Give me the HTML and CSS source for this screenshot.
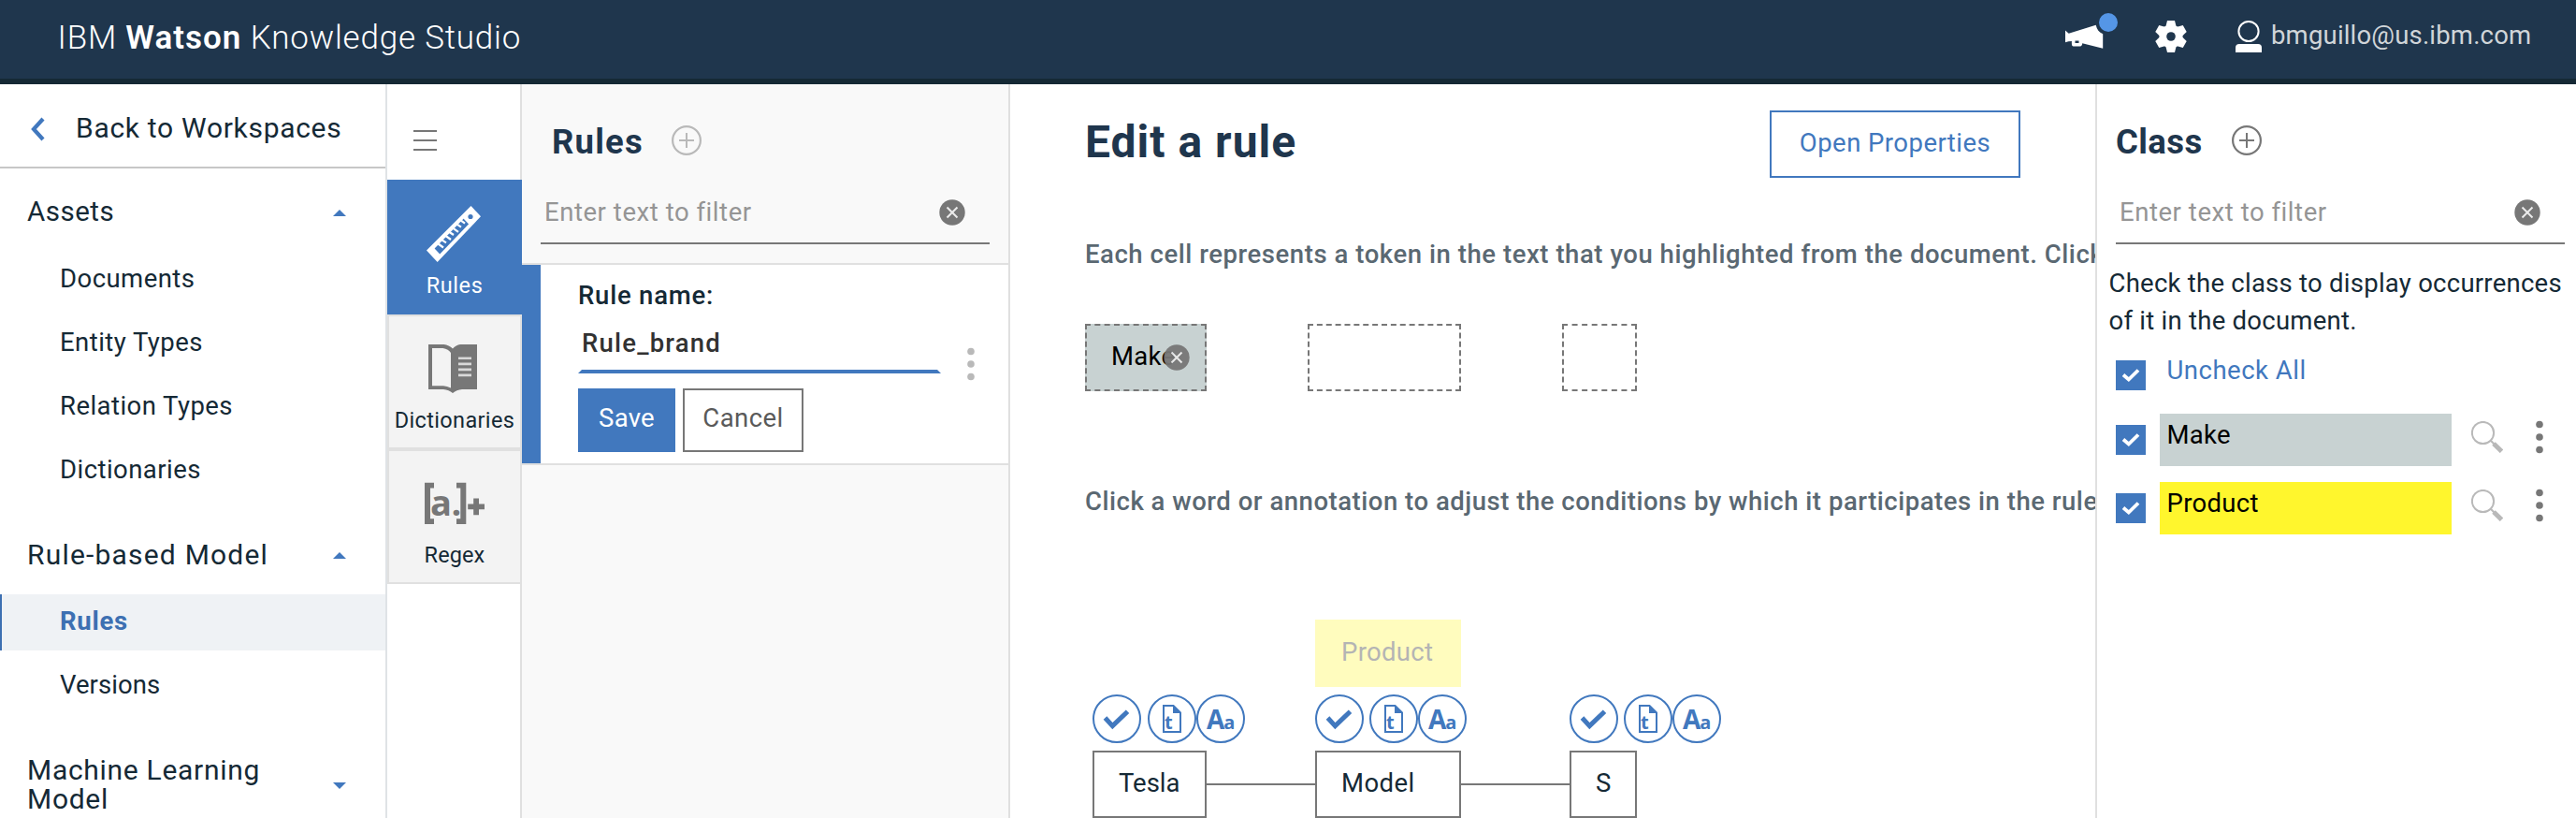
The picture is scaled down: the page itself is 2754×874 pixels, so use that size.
FILE: index.html
```html
<!DOCTYPE html>
<html lang="en">
<head>
<meta charset="utf-8">
<title>IBM Watson Knowledge Studio</title>
<link rel="stylesheet" href="styles.css">
</head>
<body>
<svg class="defs" aria-hidden="true">
  <symbol id="clear" viewBox="0 0 28 28">
    <circle cx="14" cy="14" r="13.7" fill="#777"/>
    <path d="M8.5 8.5 19.5 19.5M19.5 8.5 8.5 19.5" stroke="#fff" stroke-opacity=".85" stroke-width="2"/>
  </symbol>
  <symbol id="plus" viewBox="0 0 32 32">
    <circle cx="16" cy="16" r="14.9" fill="none" stroke="currentColor" stroke-width="2.2"/>
    <path d="M16 8v16M8 16h16" stroke="currentColor" stroke-width="2"/>
  </symbol>
  <symbol id="kebab" viewBox="0 0 8 36">
    <g fill="currentColor"><circle cx="4" cy="4.5" r="3.8"/><circle cx="4" cy="18" r="3.8"/><circle cx="4" cy="31.5" r="3.8"/></g>
  </symbol>
  <symbol id="search" viewBox="0 0 34 34">
    <g fill="none" stroke="#b9b9b9"><circle cx="12.5" cy="12.5" r="11.6" stroke-width="2"/><path d="M20.8 20.8l4 4" stroke-width="2"/><path d="M24 24l8.5 8.3" stroke-width="5"/></g>
  </symbol>
  <symbol id="tick" viewBox="0 0 32 32">
    <path d="M8 15.5 13.8 20.5 24 10.5" fill="none" stroke="#fff" stroke-width="3.8"/>
  </symbol>
  <symbol id="b-check" viewBox="0 0 52 52">
    <circle cx="26" cy="26" r="25" fill="#fff" stroke="#4178be" stroke-width="2"/>
    <path d="M13.5 25 21.4 33.6 37.5 18.2" fill="none" stroke="#4178be" stroke-width="5"/>
  </symbol>
  <symbol id="b-doc" viewBox="0 0 52 52">
    <circle cx="26" cy="26" r="25" fill="#fff" stroke="#4178be" stroke-width="2"/>
    <path d="M17 12h10.5l7.5 7.5V40H17z" fill="none" stroke="#4178be" stroke-width="2"/>
    <path d="M27 11v9h9z" fill="#4178be"/>
  </symbol>
  <symbol id="b-ring" viewBox="0 0 52 52">
    <circle cx="26" cy="26" r="25" fill="#fff" stroke="#4178be" stroke-width="2"/>
  </symbol>
</svg>

<header class="topbar">
  <h1 class="brand">IBM <b>Watson</b> Knowledge Studio</h1>
  <div class="tools">
    <svg class="i-news" viewBox="2204 0 64 84">
      <path d="M2208 32.5l3.7 3.2 29-9c1 4.500 3.500 8 7.500 9.500v15.600l-22-5.600c0 2.500-1 3.300-3.500 3.300h-5.500c-2 0-2.500-1-2.300-5.500l-3.500.2-3.400 1z" fill="#fff"/>
      <rect x="2218.500" y="43.500" width="4" height="2.500" fill="#1f364d"/>
      <circle cx="2254" cy="24" r="10" fill="#5596e6"/>
    </svg>
    <svg class="i-gear" viewBox="-18 -39 36 84">
      <g fill="#fff">
        <circle r="12.5"/>
        <path id="tooth" d="M-4-17H4L6-9H-6z"/>
        <use href="#tooth" transform="rotate(60)"/><use href="#tooth" transform="rotate(120)"/><use href="#tooth" transform="rotate(180)"/><use href="#tooth" transform="rotate(240)"/><use href="#tooth" transform="rotate(300)"/>
      </g>
      <circle r="4.800" fill="#1f364d"/>
    </svg>
    <svg class="i-user" viewBox="2390 0 28 84">
      <circle cx="2404" cy="33.500" r="10.600" fill="none" stroke="#fff" stroke-width="2"/>
      <path d="M2390 56v-5q0-4 4-4h20q4 0 4 4v5z" fill="#fff"/>
    </svg>
    <span class="email">bmguillo@us.ibm.com</span>
  </div>
</header>

<div class="app">
  <nav class="sidebar">
    <a class="back"><svg viewBox="0 0 16 26"><path d="M13 2 3 13 13 24" fill="none" stroke="#4178be" stroke-width="4.200"/></svg><span>Back to Workspaces</span></a>
    <div class="groups">
      <section>
        <h2 class="group assets"><span>Assets</span><i class="up"></i></h2>
        <ul>
          <li>Documents</li>
          <li>Entity Types</li>
          <li>Relation Types</li>
          <li>Dictionaries</li>
        </ul>
      </section>
      <section>
        <h2 class="group model"><span>Rule-based Model</span><i class="up"></i></h2>
        <ul>
          <li class="current">Rules</li>
          <li class="versions">Versions</li>
        </ul>
      </section>
      <section>
        <h2 class="group ml"><span>Machine Learning<br>Model</span><i class="down"></i></h2>
      </section>
    </div>
  </nav>

  <div class="rail">
    <div class="menu"><span></span><span></span><span></span></div>
    <div class="tile active">
      <svg viewBox="0 0 60 60" width="60" height="60">
        <path d="M47.500 0 58 11.300 11.600 60 0 47.500z" fill="#fff"/>
        <path d="M46.800 6.200 52.400 11.700 14.200 51.600 8.600 45.600z" fill="#4178be"/>
        <path d="M12.500 40.500l5.500 4M16.500 36.300l4.500 3M20.500 32l5.500 4M24.500 28l4.500 3M28.500 23.800l5.500 4M32.500 19.600l4.500 3M36.500 15.400l4.500 3.300" stroke="#fff" stroke-width="2.200"/>
        <path d="M38.500 12.500 48 3.500l7 7.500-9 9.500z" fill="#fff"/>
        <circle cx="47" cy="11.500" r="2.600" fill="#4178be"/>
      </svg>
      <span class="t-rules">Rules</span>
    </div>
    <div class="tile">
      <svg viewBox="0 0 60 60" width="60" height="60">
        <path d="M2 4H18.500Q24 4.500 28 8.500 31.500 4.500 36 4H54V52H38Q32 52.500 28 56 24 52.500 18 52H2z" fill="#777"/>
        <path d="M6 8H17.500Q23.500 9 26 13V50.500Q22 48.500 18 48.300H6z" fill="#f3f3f3"/>
        <path d="M34 18.700h14M34 24.900h14M34 30.900h14M34 36.900h14" stroke="#d8d8d8" stroke-width="2.600"/>
      </svg>
      <span class="t-dict">Dictionaries</span>
    </div>
    <div class="tile">
      <svg viewBox="0 0 66 60" width="66" height="60">
        <path d="M1 7.700H11V13.500H7V46.200H11V52H1zM35 7.700H45.300V52H35V46.200H39.300V13.500H35zM53.200 24.500h5.800v6h6v5.800h-6v6h-5.800v-6h-6v-5.800h6z" fill="#777"/>
        <text x="7" y="42.500" class="regex-a" font-size="38">a.</text>
      </svg>
      <span class="t-regex">Regex</span>
    </div>
  </div>

  <section class="rules">
    <div class="panel-head">
      <div class="panel-title"><h2 class="h-rules">Rules</h2><svg class="plus muted"><use href="#plus"/></svg></div>
      <div class="filter"><span>Enter text to filter</span><svg class="clear"><use href="#clear"/></svg></div>
    </div>
    <div class="card">
      <div class="card-body">
        <div class="form">
          <label>Rule name:</label>
          <div class="field">Rule_brand</div>
          <div class="actions"><button class="save">Save</button><button class="cancel">Cancel</button></div>
        </div>
        <svg class="kebab muted"><use href="#kebab"/></svg>
      </div>
    </div>
  </section>

  <main class="editor">
    <div class="editor-head"><h2>Edit a rule</h2><button class="props">Open Properties</button></div>
    <p class="hint first">Each cell represents a token in the text that you highlighted from the document. Click</p>
    <div class="cells">
      <div class="cell c1">Make<svg class="clear remove"><use href="#clear"/></svg></div>
      <div class="cell c2"></div>
      <div class="cell c3"></div>
    </div>
    <p class="hint second">Click a word or annotation to adjust the conditions by which it participates in the rule</p>
    <div class="graph">
      <div class="node n1">
        <div class="badges"><svg><use href="#b-check"/></svg><svg><use href="#b-doc"/><text x="18" y="37" class="glyph t">t</text></svg><svg><use href="#b-ring"/><text x="11" y="37" class="glyph">A<tspan class="low" dx="-1">a</tspan></text></svg></div>
        <div class="word tesla">Tesla</div>
      </div>
      <div class="link"></div>
      <div class="node n2">
        <div class="annotation">Product</div>
        <div class="badges"><svg><use href="#b-check"/></svg><svg><use href="#b-doc"/><text x="18" y="37" class="glyph t">t</text></svg><svg><use href="#b-ring"/><text x="11" y="37" class="glyph">A<tspan class="low" dx="-1">a</tspan></text></svg></div>
        <div class="word mdl">Model</div>
      </div>
      <div class="link"></div>
      <div class="node n3">
        <div class="badges"><svg><use href="#b-check"/></svg><svg><use href="#b-doc"/><text x="18" y="37" class="glyph t">t</text></svg><svg><use href="#b-ring"/><text x="11" y="37" class="glyph">A<tspan class="low" dx="-1">a</tspan></text></svg></div>
        <div class="word">S</div>
      </div>
    </div>
  </main>

  <aside class="classes">
    <div class="panel-title"><h2 class="h-class">Class</h2><svg class="plus"><use href="#plus"/></svg></div>
    <div class="filter"><span>Enter text to filter</span><svg class="clear"><use href="#clear"/></svg></div>
    <p class="note">Check the class to display occurrences<br>of it in the document.</p>
    <div class="row all"><svg class="box"><use href="#tick"/></svg><a>Uncheck All</a></div>
    <div class="row"><svg class="box"><use href="#tick"/></svg><div class="label make">Make</div><svg class="search"><use href="#search"/></svg><svg class="kebab"><use href="#kebab"/></svg></div>
    <div class="row"><svg class="box"><use href="#tick"/></svg><div class="label product">Product</div><svg class="search"><use href="#search"/></svg><svg class="kebab"><use href="#kebab"/></svg></div>
  </aside>
</div>
</body>
</html>
```
FILE: styles.css
```css
* { box-sizing: border-box; }
body {
  margin: 0;
  height: 874px;
  overflow: hidden;
  background: #fff;
  color: #152935;
  font: 27.5px/32px Roboto, "Noto Sans", sans-serif;
  letter-spacing: .45px;
}
h1, h2, p, ul { margin: 0; padding: 0; font-weight: 400; }
ul { list-style: none; }
button { font: inherit; letter-spacing: inherit; border-radius: 0; padding: 0; background: #fff; }
svg { display: block; flex: none; }
.defs { position: absolute; width: 0; height: 0; }
.glyph, .regex-a { font-family: "Open Sans", "Noto Sans", sans-serif; font-weight: 700; letter-spacing: 0; fill: #4178be; }
.glyph { font-size: 28px; }
.glyph.t { font-size: 20px; }
.low { font-size: 20px; }
.regex-a { fill: #777; letter-spacing: -.5px; }

/* top bar */
.topbar {
  display: flex;
  justify-content: space-between;
  height: 90px;
  background: #1f364d;
  border-bottom: 6px solid #152935;
  color: #fff;
}
.brand { padding-left: 61.500px; font-size: 35px; line-height: 82px; font-weight: 300; letter-spacing: .8px; white-space: nowrap; }
.brand b { font-weight: 600; letter-spacing: 1px; }
.tools { display: flex; width: 550px; }
.i-news { width: 64px; height: 84px; }
.i-gear { width: 36px; height: 84px; margin-left: 35px; }
.i-user { width: 28px; height: 84px; margin-left: 51px; }
.email { margin-left: 10px; line-height: 75px; letter-spacing: .18px; color: #d0d5d9; }

.app { display: flex; height: 784px; }

/* sidebar */
.sidebar { width: 414px; flex: none; border-right: 2px solid #dfe3e6; }
.back {
  display: flex;
  height: 90px;
  padding: 5px 0 0 33px;
  border-bottom: 2px solid #c7c7c7;
  font-size: 30px;
  line-height: 83px;
  letter-spacing: .7px;
}
.back svg { width: 16px; height: 26px; margin: 30px 32px 0 0; }
.groups { display: flex; flex-direction: column; gap: 28px; }
.group {
  display: flex;
  justify-content: space-between;
  align-items: center;
  padding: 15.500px 42px 15.500px 29px;
  margin-bottom: 12px;
  font-size: 29.500px;
  line-height: 31px;
}
.groups section:first-child { padding-top: 15px; }
.assets { letter-spacing: .5px; }
.model { font-size: 30px; letter-spacing: 1.200px; }
.ml { font-size: 30px; letter-spacing: .700px; }
.up, .down { border: 7px solid transparent; border-top: 0; border-bottom: 7px solid #4178be; margin-top: 3px; }
.down { border-bottom: 0; border-top: 7px solid #4178be; }
.sidebar ul { display: flex; flex-direction: column; gap: 8px; }
.sidebar li { height: 60px; padding-left: 62px; border-left: 2px solid transparent; line-height: 57.500px; }
.sidebar .current { background: #eff2f5; border-left-color: #3d70b2; color: #3d70b2; font-weight: 700; letter-spacing: .7px; }
.sidebar .versions { letter-spacing: .06px; }

/* tool rail */
.rail { width: 144px; flex: none; border-right: 2px solid #e0e0e0; }
.menu { display: flex; flex-direction: column; gap: 8px; height: 102px; padding: 49px 0 0 27.500px; }
.menu span { width: 25px; height: 2px; background: #777; }
.tile {
  display: flex;
  flex-direction: column;
  align-items: center;
  gap: 10px;
  height: 144px;
  margin-right: -2px;
  padding-top: 26px;
  border: 2px solid #e0e0e0;
  background: #f3f3f3;
  font-size: 23.500px;
  line-height: 30px;
}
.tile.active { background: #4178be; border-color: #4178be; color: #fff; }
.t-rules { letter-spacing: .6px; }
.t-dict { letter-spacing: .35px; }
.t-regex { letter-spacing: .1px; }

/* shared panel parts */
.panel-title { display: flex; padding: 30px 0 0 32px; height: 94px; }
.panel-title h2 { font-size: 36.500px; line-height: 63px; font-weight: 700; color: #1f364d; }
.h-rules { width: 128px; letter-spacing: 1.200px; }
.h-class { width: 124px; letter-spacing: .400px; }
.plus { width: 32px; height: 32px; margin-top: 14px; color: #777; }
.plus.muted, .kebab.muted { color: #b9b9b9; }
.filter {
  display: flex;
  justify-content: space-between;
  align-items: center;
  width: 480px;
  height: 68px;
  margin: 9px 0 0 20px;
  padding: 1px 26px 0 4px;
  border-bottom: 2px solid #777;
  color: #959595;
  letter-spacing: .55px;
}
.clear { width: 28px; height: 28px; }
.kebab { width: 8px; height: 36px; color: #777; }

/* rules panel */
.rules { width: 522px; flex: none; background: #f9f9f9; border-right: 2px solid #e0e0e0; }
.panel-head { height: 193px; border-bottom: 2px solid #e0e0e0; }
.card { background: #fff; border-bottom: 2px solid #e0e0e0; }
.card-body { display: flex; height: 212px; padding: 16px 0 0 40px; border-left: 20px solid #4178be; }
.form { width: 388px; }
.form label { display: block; line-height: 33px; font-weight: 500; letter-spacing: .78px; }
.field {
  height: 67px;
  padding-top: 6px;
  border: 4px solid transparent;
  border-top: 0;
  border-bottom-color: #4178be;
  line-height: 57px;
  font-weight: 500;
  letter-spacing: 1.200px;
  color: #323232;
}
.actions { display: flex; gap: 8px; margin-top: 16px; }
.actions button { height: 68px; padding-bottom: 5px; }
.save { width: 104px; border: 0; background: #4178be; color: #fff; letter-spacing: .26px; }
.cancel { width: 129px; border: 2px solid #777; color: #5a5a5a; }
.card .kebab { margin: 72px 0 0 28px; }

/* editor */
.editor { flex: 1; min-width: 0; overflow: hidden; padding: 28px 0 0 80px; }
.editor-head { display: flex; justify-content: space-between; align-items: center; padding-right: 80px; height: 72px; }
.editor-head h2 { padding-bottom: 4px; font-size: 48px; line-height: 60px; font-weight: 700; letter-spacing: 1px; color: #1f364d; }
.props { width: 268px; height: 72px; padding-bottom: 3px; border: 2px solid #4178be; color: #4178be; }
.hint { line-height: 40px; white-space: nowrap; font-weight: 500; color: #5a6872; }
.hint.first { margin-top: 62px; letter-spacing: .55px; }
.hint.second { margin-top: 98px; letter-spacing: .52px; }
.cells { display: flex; gap: 108px; margin-top: 54px; }
.cell { position: relative; height: 72px; padding-left: 26px; border: 2px dashed #777; line-height: 66px; color: #000; letter-spacing: .3px; }
.c1 { width: 130px; background: #c8d2d2; }
.c2 { width: 164px; }
.c3 { width: 80px; }
.remove { position: absolute; top: 20px; right: 16px; opacity: .95; }
.graph { display: flex; align-items: flex-end; margin-top: 106px; padding-left: 8px; }
.node { display: flex; flex-direction: column; gap: 8px; flex: none; }
.n1 { width: 122px; }
.n2 { width: 156px; }
.n3 { width: 72px; }
.link { width: 116px; height: 2px; margin-bottom: 35px; background: #777; flex: none; }
.badges { display: flex; }
.badges svg { width: 52px; height: 52px; }
.badges svg:first-child { margin-right: 6px; }
.n1 .badges svg:first-child { margin-right: 7px; }
.word { height: 72px; padding-left: 26px; border: 2px solid #777; line-height: 66px; }
.tesla { letter-spacing: 0; }
.mdl { letter-spacing: .4px; }
.annotation { height: 72px; padding-left: 28px; background: #fffcbe; line-height: 70px; color: #b4b4b4; letter-spacing: .31px; }

/* class panel */
.classes { width: 514px; flex: none; border-left: 2px solid #e0e0e0; }
.classes .panel-title { padding-left: 20px; }
.note { margin: 21.500px 0 0 12.500px; line-height: 40px; letter-spacing: .25px; white-space: nowrap; }
.row { display: flex; align-items: center; height: 56px; margin-top: 17px; padding-left: 20px; }
.row.all { height: 32px; margin: 22.500px 0 25px; align-items: flex-start; }
.row.all + .row { margin-top: 0; }
.row a { margin-left: 22.500px; line-height: 21px; letter-spacing: .5px; color: #4178be; }
.box { width: 32px; height: 32px; background: #4178be; }
.label { width: 312px; height: 56px; margin-left: 15px; padding-left: 7.500px; line-height: 45.500px; color: #000; letter-spacing: .3px; }
.make { background: #c8d2d2; }
.product { background: #fff62d; }
.search { width: 34px; height: 34px; margin: 0 35px 6px 21px; }
.row .kebab { margin-bottom: 6px; }
```
